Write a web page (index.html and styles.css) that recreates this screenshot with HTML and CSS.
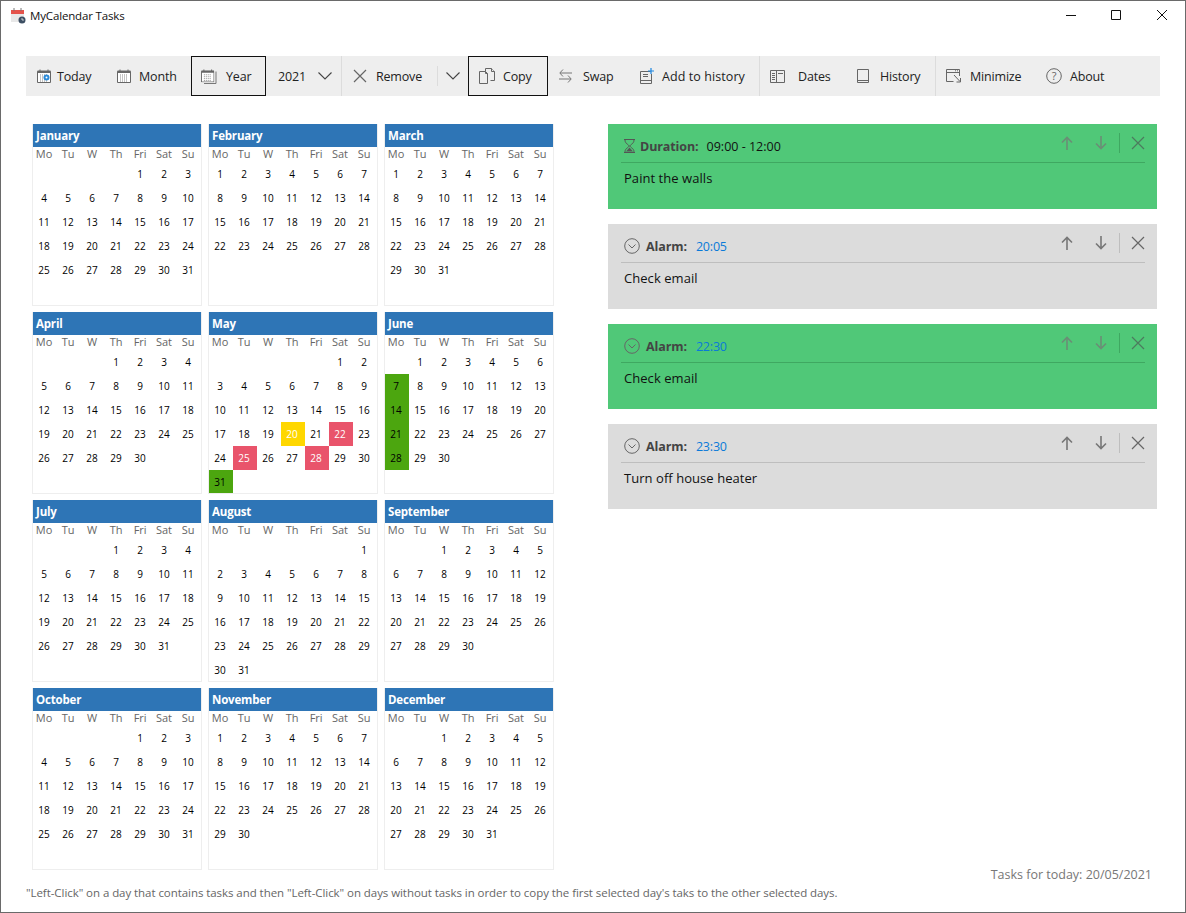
FILE: index.html
```html
<!DOCTYPE html>
<html lang="en">
<head>
<meta charset="utf-8">
<title>MyCalendar Tasks</title>
<link rel="stylesheet" href="styles.css">
</head>
<body>
<svg class="sprite" aria-hidden="true">
  <symbol id="cal" viewBox="0 0 14 14"><path d="M.5 2.5h13v11H.5z" fill="#fff" stroke="#666"/><path d="M.5 1.5h13V4H.5z" fill="#666"/><path d="M3 .5v2M11 .5v2" stroke="#666"/><path d="M3 6h8M3 8h8M3 10h8M3 12h8" stroke="#888" stroke-dasharray="1 1"/></symbol>
  <symbol id="up" viewBox="0 0 12 14"><path d="M6 14V1.5M1 6.5l5-5 5 5" fill="none" stroke="currentColor" stroke-width="1.6"/></symbol>
  <symbol id="down" viewBox="0 0 12 14"><path d="M6 0v12.5M1 7.5l5 5 5-5" fill="none" stroke="currentColor" stroke-width="1.6"/></symbol>
  <symbol id="x" viewBox="0 0 14 14"><path d="M1 1l12 12M13 1L1 13" fill="none" stroke="currentColor" stroke-width="1.2"/></symbol>
  <symbol id="chev" viewBox="0 0 14 8"><path d="M.5.5L7 7 13.5.5" fill="none" stroke="#444" stroke-width="1.1"/></symbol>
  <symbol id="alarm" viewBox="0 0 16 16"><circle cx="8" cy="8" r="7.3" fill="none" stroke="#666"/><path d="M4.5 6.5L8 10l3.500-3.500" fill="none" stroke="#666"/></symbol>
</svg>
<div class="window">
  <header class="titlebar">
    <svg class="app-icon" width="15" height="16" viewBox="0 0 15 16"><path d="M0 2h13v12H0z" fill="#e8e8e8"/><path d="M0 2h13v4H0z" fill="#e5534b"/><path d="M3 0v3M10 0v3" stroke="#777"/><circle cx="11" cy="12" r="3.500" fill="#3d4f63"/><path d="M11 10v2h2" stroke="#fff" stroke-width=".7" fill="none"/></svg>
    <span class="app-title">MyCalendar Tasks</span>
    <div class="winctl">
      <svg width="10" height="10" viewBox="0 0 10 10"><path d="M0 5.500h10" stroke="#111"/></svg>
      <svg width="10" height="10" viewBox="0 0 10 10"><path d="M.5.500h9v9h-9z" fill="none" stroke="#111"/></svg>
      <svg class="win-close" width="10" height="10" viewBox="0 0 10 10"><path d="M0 0l10 10M10 0L0 10" stroke="#111"/></svg>
    </div>
  </header>

  <nav class="toolbar">
    <button class="tool t-today"><svg class="ic" width="14" height="14" viewBox="0 0 14 14"><use href="#cal"/><circle cx="9.500" cy="8.500" r="3" fill="#2b8ad8"/><circle cx="9.500" cy="8.500" r="1" fill="#fff"/></svg>Today</button>
    <button class="tool t-month"><svg class="ic" width="14" height="14"><use href="#cal"/></svg>Month</button>
    <button class="tool t-year active"><svg class="ic" width="16" height="15" viewBox="0 0 16 15"><path d="M15 2.500V14.500H3" fill="none" stroke="#777"/><svg width="13.500" height="13.500"><use href="#cal"/></svg></svg>Year</button>
    <button class="tool t-num">2021<svg class="chev" width="14" height="8"><use href="#chev"/></svg></button>
    <i class="sep"></i>
    <button class="tool t-remove"><svg class="ic" width="14" height="14" color="#666"><use href="#x"/></svg>Remove</button>
    <i class="sep short"></i>
    <button class="tool t-more"><svg width="14" height="8"><use href="#chev"/></svg></button>
    <button class="tool t-copy active"><svg class="ic" width="16" height="16" viewBox="0 0 16 16"><path d="M6.500 3.500V.5h6l3 3v9h-4" fill="#eee" stroke="#666"/><path d="M.5 3.500h6l2 2v10h-8zM12.500.5v3h3" fill="#eee" stroke="#666"/><path d="M6.500 3.500v2h2" fill="none" stroke="#666"/></svg>Copy</button>
    <button class="tool t-swap"><svg class="ic" width="13" height="14" viewBox="0 0 13 14"><path d="M13 4H1M4 .5L.8 4 4 7.500M0 10h12M9 6.500l3.200 3.500L9 13.500" fill="none" stroke="#777"/></svg>Swap</button>
    <button class="tool t-add"><svg class="ic" width="14" height="16" viewBox="0 0 14 16"><path d="M10.500 3.500H.5v12h11V6" fill="none" stroke="#666"/><path d="M.5 12.500h11M3 6.500h5M3 8.500h5" stroke="#666"/><path d="M11 0v6M8 3h6" stroke="#1d86e0" stroke-width="1.200"/></svg>Add to history</button>
    <i class="sep"></i>
    <button class="tool t-dates"><svg class="ic" width="15" height="13" viewBox="0 0 15 13"><path d="M.5.500h14v12H.5zM6.500.5v12M2 3.500h3M2 5.500h3M2 7.500h3M2 9.500h3M8 3.500h5" fill="none" stroke="#666"/></svg>Dates</button>
    <button class="tool t-history"><svg class="ic" width="12" height="14" viewBox="0 0 12 14"><path d="M.5.500h11v13H.5zM.5 11.500h11" fill="none" stroke="#666"/></svg>History</button>
    <i class="sep"></i>
    <button class="tool t-min"><svg class="ic" width="15" height="14" viewBox="0 0 15 14"><path d="M13.500 7V.5H.5v12h7M.5 3.500h13" fill="none" stroke="#666"/><path d="M9 1.800h3" stroke="#666" stroke-dasharray="1 1"/><path d="M8 6l6 6.500M14.500 9v4h-4" fill="none" stroke="#666"/></svg>Minimize</button>
    <button class="tool t-about"><svg class="ic" width="16" height="16" viewBox="0 0 16 16"><circle cx="8" cy="8" r="7.300" fill="none" stroke="#666"/><text class="qm" x="8" y="11.800" text-anchor="middle">?</text></svg>About</button>
  </nav>

  <main class="content">
    <section class="year">
      <article class="month"><h2>January</h2><div class="days s5"><b>Mo</b><b>Tu</b><b>W</b><b>Th</b><b>Fri</b><b>Sat</b><b>Su</b><span>1</span><span>2</span><span>3</span><span>4</span><span>5</span><span>6</span><span>7</span><span>8</span><span>9</span><span>10</span><span>11</span><span>12</span><span>13</span><span>14</span><span>15</span><span>16</span><span>17</span><span>18</span><span>19</span><span>20</span><span>21</span><span>22</span><span>23</span><span>24</span><span>25</span><span>26</span><span>27</span><span>28</span><span>29</span><span>30</span><span>31</span></div></article>
      <article class="month"><h2>February</h2><div class="days s1"><b>Mo</b><b>Tu</b><b>W</b><b>Th</b><b>Fri</b><b>Sat</b><b>Su</b><span>1</span><span>2</span><span>3</span><span>4</span><span>5</span><span>6</span><span>7</span><span>8</span><span>9</span><span>10</span><span>11</span><span>12</span><span>13</span><span>14</span><span>15</span><span>16</span><span>17</span><span>18</span><span>19</span><span>20</span><span>21</span><span>22</span><span>23</span><span>24</span><span>25</span><span>26</span><span>27</span><span>28</span></div></article>
      <article class="month"><h2>March</h2><div class="days s1"><b>Mo</b><b>Tu</b><b>W</b><b>Th</b><b>Fri</b><b>Sat</b><b>Su</b><span>1</span><span>2</span><span>3</span><span>4</span><span>5</span><span>6</span><span>7</span><span>8</span><span>9</span><span>10</span><span>11</span><span>12</span><span>13</span><span>14</span><span>15</span><span>16</span><span>17</span><span>18</span><span>19</span><span>20</span><span>21</span><span>22</span><span>23</span><span>24</span><span>25</span><span>26</span><span>27</span><span>28</span><span>29</span><span>30</span><span>31</span></div></article>
      <article class="month"><h2>April</h2><div class="days s4"><b>Mo</b><b>Tu</b><b>W</b><b>Th</b><b>Fri</b><b>Sat</b><b>Su</b><span>1</span><span>2</span><span>3</span><span>4</span><span>5</span><span>6</span><span>7</span><span>8</span><span>9</span><span>10</span><span>11</span><span>12</span><span>13</span><span>14</span><span>15</span><span>16</span><span>17</span><span>18</span><span>19</span><span>20</span><span>21</span><span>22</span><span>23</span><span>24</span><span>25</span><span>26</span><span>27</span><span>28</span><span>29</span><span>30</span></div></article>
      <article class="month"><h2>May</h2><div class="days s6"><b>Mo</b><b>Tu</b><b>W</b><b>Th</b><b>Fri</b><b>Sat</b><b>Su</b><span>1</span><span>2</span><span>3</span><span>4</span><span>5</span><span>6</span><span>7</span><span>8</span><span>9</span><span>10</span><span>11</span><span>12</span><span>13</span><span>14</span><span>15</span><span>16</span><span>17</span><span>18</span><span>19</span><span class="today">20</span><span>21</span><span class="red">22</span><span>23</span><span>24</span><span class="red">25</span><span>26</span><span>27</span><span class="red">28</span><span>29</span><span>30</span><span class="grn">31</span></div></article>
      <article class="month"><h2>June</h2><div class="days s2"><b>Mo</b><b>Tu</b><b>W</b><b>Th</b><b>Fri</b><b>Sat</b><b>Su</b><span>1</span><span>2</span><span>3</span><span>4</span><span>5</span><span>6</span><span class="grn">7</span><span>8</span><span>9</span><span>10</span><span>11</span><span>12</span><span>13</span><span class="grn">14</span><span>15</span><span>16</span><span>17</span><span>18</span><span>19</span><span>20</span><span class="grn">21</span><span>22</span><span>23</span><span>24</span><span>25</span><span>26</span><span>27</span><span class="grn">28</span><span>29</span><span>30</span></div></article>
      <article class="month"><h2>July</h2><div class="days s4"><b>Mo</b><b>Tu</b><b>W</b><b>Th</b><b>Fri</b><b>Sat</b><b>Su</b><span>1</span><span>2</span><span>3</span><span>4</span><span>5</span><span>6</span><span>7</span><span>8</span><span>9</span><span>10</span><span>11</span><span>12</span><span>13</span><span>14</span><span>15</span><span>16</span><span>17</span><span>18</span><span>19</span><span>20</span><span>21</span><span>22</span><span>23</span><span>24</span><span>25</span><span>26</span><span>27</span><span>28</span><span>29</span><span>30</span><span>31</span></div></article>
      <article class="month"><h2>August</h2><div class="days s7"><b>Mo</b><b>Tu</b><b>W</b><b>Th</b><b>Fri</b><b>Sat</b><b>Su</b><span>1</span><span>2</span><span>3</span><span>4</span><span>5</span><span>6</span><span>7</span><span>8</span><span>9</span><span>10</span><span>11</span><span>12</span><span>13</span><span>14</span><span>15</span><span>16</span><span>17</span><span>18</span><span>19</span><span>20</span><span>21</span><span>22</span><span>23</span><span>24</span><span>25</span><span>26</span><span>27</span><span>28</span><span>29</span><span>30</span><span>31</span></div></article>
      <article class="month"><h2>September</h2><div class="days s3"><b>Mo</b><b>Tu</b><b>W</b><b>Th</b><b>Fri</b><b>Sat</b><b>Su</b><span>1</span><span>2</span><span>3</span><span>4</span><span>5</span><span>6</span><span>7</span><span>8</span><span>9</span><span>10</span><span>11</span><span>12</span><span>13</span><span>14</span><span>15</span><span>16</span><span>17</span><span>18</span><span>19</span><span>20</span><span>21</span><span>22</span><span>23</span><span>24</span><span>25</span><span>26</span><span>27</span><span>28</span><span>29</span><span>30</span></div></article>
      <article class="month"><h2>October</h2><div class="days s5"><b>Mo</b><b>Tu</b><b>W</b><b>Th</b><b>Fri</b><b>Sat</b><b>Su</b><span>1</span><span>2</span><span>3</span><span>4</span><span>5</span><span>6</span><span>7</span><span>8</span><span>9</span><span>10</span><span>11</span><span>12</span><span>13</span><span>14</span><span>15</span><span>16</span><span>17</span><span>18</span><span>19</span><span>20</span><span>21</span><span>22</span><span>23</span><span>24</span><span>25</span><span>26</span><span>27</span><span>28</span><span>29</span><span>30</span><span>31</span></div></article>
      <article class="month"><h2>November</h2><div class="days s1"><b>Mo</b><b>Tu</b><b>W</b><b>Th</b><b>Fri</b><b>Sat</b><b>Su</b><span>1</span><span>2</span><span>3</span><span>4</span><span>5</span><span>6</span><span>7</span><span>8</span><span>9</span><span>10</span><span>11</span><span>12</span><span>13</span><span>14</span><span>15</span><span>16</span><span>17</span><span>18</span><span>19</span><span>20</span><span>21</span><span>22</span><span>23</span><span>24</span><span>25</span><span>26</span><span>27</span><span>28</span><span>29</span><span>30</span></div></article>
      <article class="month"><h2>December</h2><div class="days s3"><b>Mo</b><b>Tu</b><b>W</b><b>Th</b><b>Fri</b><b>Sat</b><b>Su</b><span>1</span><span>2</span><span>3</span><span>4</span><span>5</span><span>6</span><span>7</span><span>8</span><span>9</span><span>10</span><span>11</span><span>12</span><span>13</span><span>14</span><span>15</span><span>16</span><span>17</span><span>18</span><span>19</span><span>20</span><span>21</span><span>22</span><span>23</span><span>24</span><span>25</span><span>26</span><span>27</span><span>28</span><span>29</span><span>30</span><span>31</span></div></article>
    </section>

    <aside class="tasks">
      <article class="task green">
        <div class="task-head">
          <svg class="t-ic hg" width="11" height="14" viewBox="0 0 11 14"><path d="M0 .5h11M0 13.500h11M1 1c0 4 4 4.500 4 6s-4 2-4 6M10 1c0 4-4 4.500-4 6s4 2 4 6" fill="none" stroke="#555"/><path d="M2 12.500l3.500-4 3.500 4z" fill="#555"/></svg>
          <strong class="lbl-dur">Duration:</strong><span class="val-dur">09:00 - 12:00</span>
          <div class="task-act"><svg class="a-up" width="12" height="14"><use href="#up"/></svg><svg class="a-down" width="12" height="14"><use href="#down"/></svg><i class="vline"></i><svg class="a-x" width="14" height="14"><use href="#x"/></svg></div>
        </div>
        <p>Paint the walls</p>
      </article>
      <article class="task gray">
        <div class="task-head">
          <svg class="t-ic" width="16" height="16"><use href="#alarm"/></svg>
          <strong class="lbl">Alarm:</strong><span class="val">20:05</span>
          <div class="task-act"><svg class="a-up" width="12" height="14"><use href="#up"/></svg><svg class="a-down" width="12" height="14"><use href="#down"/></svg><i class="vline"></i><svg class="a-x" width="14" height="14"><use href="#x"/></svg></div>
        </div>
        <p>Check email</p>
      </article>
      <article class="task green">
        <div class="task-head">
          <svg class="t-ic" width="16" height="16"><use href="#alarm"/></svg>
          <strong class="lbl">Alarm:</strong><span class="val">22:30</span>
          <div class="task-act"><svg class="a-up" width="12" height="14"><use href="#up"/></svg><svg class="a-down" width="12" height="14"><use href="#down"/></svg><i class="vline"></i><svg class="a-x" width="14" height="14"><use href="#x"/></svg></div>
        </div>
        <p>Check email</p>
      </article>
      <article class="task gray">
        <div class="task-head">
          <svg class="t-ic" width="16" height="16"><use href="#alarm"/></svg>
          <strong class="lbl">Alarm:</strong><span class="val">23:30</span>
          <div class="task-act"><svg class="a-up" width="12" height="14"><use href="#up"/></svg><svg class="a-down" width="12" height="14"><use href="#down"/></svg><i class="vline"></i><svg class="a-x" width="14" height="14"><use href="#x"/></svg></div>
        </div>
        <p>Turn off house heater</p>
      </article>
      <div class="today-line">Tasks for today: 20/05/2021</div>
    </aside>
  </main>

  <footer class="hint">"Left-Click" on a day that contains tasks and then "Left-Click" on days without tasks in order to copy the first selected day's taks to the other selected days.</footer>
</div>
</body>
</html>
```

FILE: styles.css
```css
* { box-sizing: border-box; }
html, body { margin: 0; padding: 0; background: #fff; }
body { font-family: "Open Sans", "Noto Sans", sans-serif; color: #222; overflow: hidden; }
.sprite { display: none; }

.window {
  width: 1186px;
  height: 913px;
  border: 1px solid #6a6a6a;
  display: flex;
  flex-direction: column;
  overflow: hidden;
}

.titlebar { height: 31px; display: flex; align-items: center; padding-left: 10px; flex: none; }
.app-icon { margin-right: 4px; margin-top: -1px; }
.app-title { font-size: 11.5px; color: #111; margin-top: -2px; letter-spacing: -.15px; }
.winctl { margin-left: auto; display: flex; gap: 35px; padding-right: 18px; margin-top: -1px; }
.winctl svg { display: block; margin-top: -2px; }
.winctl .win-close { margin-left: 1px; }

.toolbar {
  flex: none;
  margin: 24px 0 0 25px;
  width: 1134px;
  height: 40px;
  background: #eee;
  display: flex;
  align-items: center;
}
.tool {
  height: 40px;
  border: 0;
  background: none;
  padding: 0;
  margin: 0;
  display: flex;
  align-items: center;
  font: 12.5px "Open Sans", "Noto Sans", sans-serif;
  letter-spacing: -.18px;
  color: #222;
  white-space: nowrap;
  flex: none;
}
.tool.active { border: 1px solid #111; }
.ic { display: block; flex: none; }
.sep { width: 1px; height: 40px; background: #dcdcdc; flex: none; }
.sep.short { height: 20px; }
.qm { font: 11px "Open Sans", sans-serif; fill: #666; }

.t-today { width: 80px; padding-left: 11px; }
.t-today .ic { margin-right: 6px; }
.t-month { width: 85px; padding-left: 11px; }
.t-month .ic { margin-right: 8px; }
.t-year { width: 75px; padding-left: 9px; }
.t-year .ic { margin-right: 9px; }
.t-num { width: 75px; padding-left: 12px; }
.chev { margin-left: 12px; }
.t-remove { width: 95px; padding-left: 11px; }
.t-remove .ic { margin-right: 9px; }
.t-more { width: 30px; padding-left: 8px; }
.t-copy { width: 80px; padding-left: 10px; }
.t-copy .ic { margin-right: 8px; }
.t-swap { width: 92px; padding-left: 11px; }
.t-swap .ic { margin-right: 11px; }
.t-add { width: 119px; padding-left: 0; letter-spacing: .08px; }
.t-add .ic { margin-right: 8px; }
.t-dates { width: 87px; padding-left: 10px; }
.t-dates .ic { margin-right: 13px; }
.t-history { width: 88px; padding-left: 10px; }
.t-history .ic { margin-right: 11px; }
.t-min { width: 100px; padding-left: 10px; }
.t-min .ic { margin-right: 9px; }
.t-about { padding-left: 10px; }
.t-about .ic { margin-right: 8px; }

.content { flex: none; display: flex; align-items: flex-start; margin-top: 28px; padding-left: 31px; }

.year { display: grid; grid-template-columns: repeat(3, 170px); grid-auto-rows: 182px; gap: 6px; flex: none; }
.month { border: 1px solid #eee; border-top: 0; overflow: hidden; }
.month h2 {
  margin: 0;
  height: 23px;
  line-height: 23px;
  padding-left: 3px;
  background: #2e75b6;
  color: #fff;
  font-size: 11.5px;
  font-weight: 700;
  letter-spacing: -.18px;
}
.days { display: grid; grid-template-columns: repeat(7, 24px); grid-template-rows: 15px; grid-auto-rows: 24px; }
.days b { font-weight: 400; font-size: 11px; line-height: 13px; padding-right: 2px; text-align: center; color: #666; letter-spacing: -.1px; }
.days span { font-size: 10px; line-height: 24px; padding-right: 2px; text-align: center; color: #000; }
.s1 span:first-of-type { grid-column-start: 1; }
.s2 span:first-of-type { grid-column-start: 2; }
.s3 span:first-of-type { grid-column-start: 3; }
.s4 span:first-of-type { grid-column-start: 4; }
.s5 span:first-of-type { grid-column-start: 5; }
.s6 span:first-of-type { grid-column-start: 6; }
.s7 span:first-of-type { grid-column-start: 7; }
.days .today { background: #ffd700; color: #fff; }
.days .red { background: #e9546b; color: #fff; }
.days .grn { background: #4ca60f; color: #000; }

.tasks { flex: none; margin-left: 54px; width: 549px; height: 759px; display: flex; flex-direction: column; gap: 15px; }
.task { height: 85px; flex: none; padding: 0 12px 0 13px; font-size: 12.5px; color: #111; }
.task.green { background: #50c878; }
.task.gray { background: #dcdcdc; }
.task-head { height: 39px; display: flex; align-items: center; padding: 6px 0 0 3px; }
.task.green .task-head { border-bottom: 1px solid #3fa861; }
.task.gray .task-head { border-bottom: 1px solid #bebebe; }
.t-ic { flex: none; display: block; margin: -1px 6px 0 0; }
.hg { margin-right: 5px; }
.lbl, .lbl-dur { font-weight: 700; color: #444; letter-spacing: -.1px; }
.lbl { margin-right: 9px; }
.lbl-dur { margin-right: 8px; }
.val { color: #0a7ad8; letter-spacing: -.2px; }
.val-dur { color: #111; }
.task-act { margin-left: auto; display: flex; align-items: center; margin-top: -7px; color: #777; }
.task.green .task-act { color: #6b8e76; }
.a-up { margin-right: 22px; display: block; }
.a-down { margin-right: 12px; display: block; }
.vline { display: block; width: 1px; height: 20px; background: #bebebe; margin-right: 11px; }
.task.green .vline { background: #3fa861; }
.a-x { display: block; color: #666; }
.task.green .a-x { color: #4d7a5e; }
.task p { margin: 7px 0 0 3px; font-size: 13px; line-height: 17px; letter-spacing: .05px; }

.today-line { margin-top: auto; padding-right: 5px; text-align: right; font-size: 12.5px; line-height: 16px; color: #777; }
.hint { margin: 2px 0 0 25px; font-size: 11.5px; line-height: 16px; color: #666; white-space: nowrap; letter-spacing: -.06px; }
```
